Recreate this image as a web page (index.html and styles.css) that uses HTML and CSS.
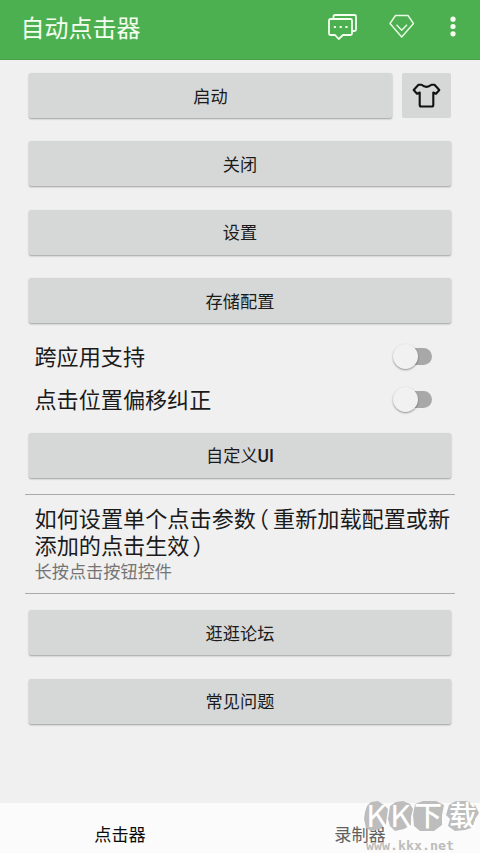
FILE: index.html
```html
<!DOCTYPE html>
<html lang="zh-CN">
<head>
<meta charset="utf-8">
<title>自动点击器</title>
<link rel="stylesheet" href="styles.css">
</head>
<body>
<header class="bar">
  <h1 class="title">自动点击器</h1>
  <svg class="icon-chat" width="32" height="30" viewBox="0 0 32 30" fill="none" stroke="#f4fff0" stroke-width="1.8" stroke-linejoin="round">
    <path d="M6.500 5V3.500Q6.500 2 8 2H27.500Q29 2 29 3.500V16.500Q29 18 27.500 18H25.500"/>
    <path d="M3.500 6H23.500Q25 6 25 7.500V20.500Q25 22 23.500 22H16L11.700 26L8 22H3.500Q2 22 2 20.500V7.500Q2 6 3.500 6Z"/>
    <path d="M6.800 14h2.200M12.600 14h2.200M18.400 14h2.200" stroke-width="2.200"/>
  </svg>
  <svg class="icon-gem" width="28" height="26" viewBox="0 0 28 26" fill="none" stroke="#e9fbe4" stroke-width="1.400" stroke-linejoin="round">
    <path d="M7.500 2.500H20L25.500 10.500L13.700 24L2 10.500Z"/>
    <path d="M8.500 11.800L13.700 17.200L19 11.800"/>
  </svg>
  <svg class="icon-more" width="6" height="22" viewBox="0 0 6 22" fill="#f4fff0">
    <circle cx="3" cy="3.200" r="2.600"/><circle cx="3" cy="10.500" r="2.600"/><circle cx="3" cy="17.800" r="2.600"/>
  </svg>
</header>
<main class="content">
  <div class="top-row">
    <button class="btn">启动</button>
    <button class="btn btn-skin" aria-label="skin">
      <svg width="30" height="28" viewBox="0 0 30 28" fill="none" stroke="#111" stroke-width="2.100" stroke-linejoin="round">
        <path d="M9.500 2.700Q14.500 6.900 19.500 2.700L22.500 2.800L27.300 8L24 11.800L21.300 10.500V23Q21.300 24.500 19.800 24.500H9.200Q7.700 24.500 7.700 23V10.500L5 11.800L1.700 8L6.500 2.800Z"/>
      </svg>
    </button>
  </div>
  <button class="btn">关闭</button>
  <button class="btn">设置</button>
  <button class="btn">存储配置</button>
  <div class="switches">
    <div class="switch-row"><span class="label">跨应用支持</span><span class="switch"></span></div>
    <div class="switch-row"><span class="label">点击位置偏移纠正</span><span class="switch"></span></div>
  </div>
  <button class="btn">自定义<b class="latin">UI</b></button>
  <section class="info">
    <p class="info-title">如何设置单个点击参数<span class="open">（</span>重新加载配置或新<br>添加的点击生效<span class="close">）</span></p>
    <p class="info-sub">长按点击按钮控件</p>
  </section>
  <button class="btn">逛逛论坛</button>
  <button class="btn">常见问题</button>
</main>
<nav class="tabs">
  <span class="tab active">点击器</span>
  <span class="tab">录制器</span>
</nav>
<svg class="mark" width="118" height="56" viewBox="0 0 118 56">
  <g fill="#bdbdbd">
    <path d="M5 9L9 5L16 4L22 8L26 12L25 19L24 27L18 32L9 34L4 31L2 22L3 15Z"/>
    <path d="M28 9L34 5L41 4L48 7L51 12L49 20L49 28L42 32L33 34L28 29L26 22Z"/>
    <path d="M53 7L61 4L74 4L82 8L80 18L80 28L72 34L58 34L52 29L51 18Z"/>
    <path d="M87 8L94 4L105 4L113 8L117 16L113 22L112 30L103 33L93 34L86 29L88 22L84 18Z"/>
  </g>
  <g class="mark-name">
    <text class="mark-k" x="4" y="30" textLength="21" lengthAdjust="spacingAndGlyphs">K</text>
    <text class="mark-k" x="28" y="30" textLength="21" lengthAdjust="spacingAndGlyphs">K</text>
    <text x="52" y="29">下</text>
    <text x="87" y="29">载</text>
  </g>
  <text class="mark-url" x="4" y="53" textLength="88" lengthAdjust="spacingAndGlyphs">www.kkx.net</text>
</svg>
</body>
</html>
```
FILE: styles.css
```css
* { box-sizing: border-box; }
body {
  margin: 0;
  width: 480px;
  height: 853px;
  display: flex;
  flex-direction: column;
  position: relative;
  overflow: hidden;
  background: #f0f0f0;
  color: #1b1b1b;
  font-family: "Noto Sans CJK SC", sans-serif;
}
.bar {
  height: 60px;
  flex: none;
  display: flex;
  align-items: flex-start;
  padding: 0 24px 0 21px;
  background: #4caf50;
  border-bottom: 1px solid #48a04b;
}
.title {
  margin: 0 auto 0 -0.500px;
  font-size: 24px;
  line-height: 54px;
  font-weight: 400;
  color: #f4fff0;
}
.icon-chat { margin: 13px 29px 0 0; }
.icon-gem { margin: 13px 34px 0 0; }
.icon-more { margin-top: 16px; }
.content {
  flex: 1;
  display: flex;
  flex-direction: column;
  padding: 13px 29px 0;
}
.btn {
  display: block;
  width: 100%;
  height: 45px;
  flex: none;
  margin: 0 0 23.400px;
  padding: 0;
  border: 0;
  border-radius: 2px;
  background: #d6d8d7;
  box-shadow: 0 1px 2px rgba(0, 0, 0, .35);
  font: 400 17.200px/44px "Noto Sans CJK SC", sans-serif;
  color: #1b1b1b;
}
.latin { font: 500 17.500px Roboto, sans-serif; }
.top-row { display: flex; gap: 10px; }
.top-row .btn { width: 363px; }
.top-row .btn-skin {
  width: 49px;
  display: flex;
  align-items: center;
  justify-content: center;
  box-shadow: none;
}
.switches { margin: -11.400px 0 11.600px; }
.switch-row {
  height: 43px;
  display: flex;
  align-items: center;
  justify-content: space-between;
  padding: 0 19px 0 5.500px;
  font-size: 22.100px;
}
.label { margin-top: -4px; }
.switch {
  width: 34px;
  height: 17px;
  border-radius: 9px;
  background: #a8a8a8;
  position: relative;
}
.switch::before {
  content: "";
  position: absolute;
  left: -5px;
  top: -4px;
  width: 25px;
  height: 25px;
  border-radius: 50%;
  background: #f1f1f1;
  box-shadow: 0 1px 2px rgba(0, 0, 0, .4);
}
.info {
  height: 99.500px;
  margin: -7px -4px 16.800px;
  padding: 9px 0 0 9.500px;
  border-top: 1px solid #aaa;
  border-bottom: 1px solid #aaa;
}
.info p { margin: 0; white-space: nowrap; }
.info-title { font-size: 22.150px; line-height: 26.500px; }
.open { margin: 0 4px 0 2px; font-feature-settings: "halt"; }
.close { margin-left: 3px; font-feature-settings: "halt"; }
.info .info-sub { padding-top: 1px; font-size: 17.200px; line-height: 26px; color: #757575; }
.tabs {
  height: 50px;
  flex: none;
  display: flex;
  background: #fbfbfb;
}
.tab {
  flex: 1;
  padding-top: 6px;
  text-align: center;
  font-size: 17.200px;
  line-height: 50px;
  color: #616161;
}
.tab.active { color: #0a0a0a; }
.mark { position: absolute; right: 0; bottom: 0; }
.mark-name { font: 500 28px "Noto Sans CJK SC", sans-serif; fill: #fff; }
.mark-k { font-size: 30px; font-weight: 400; }
.mark-url { font: 700 13px "DejaVu Sans Mono", monospace; fill: #bdbdbd; }
```
